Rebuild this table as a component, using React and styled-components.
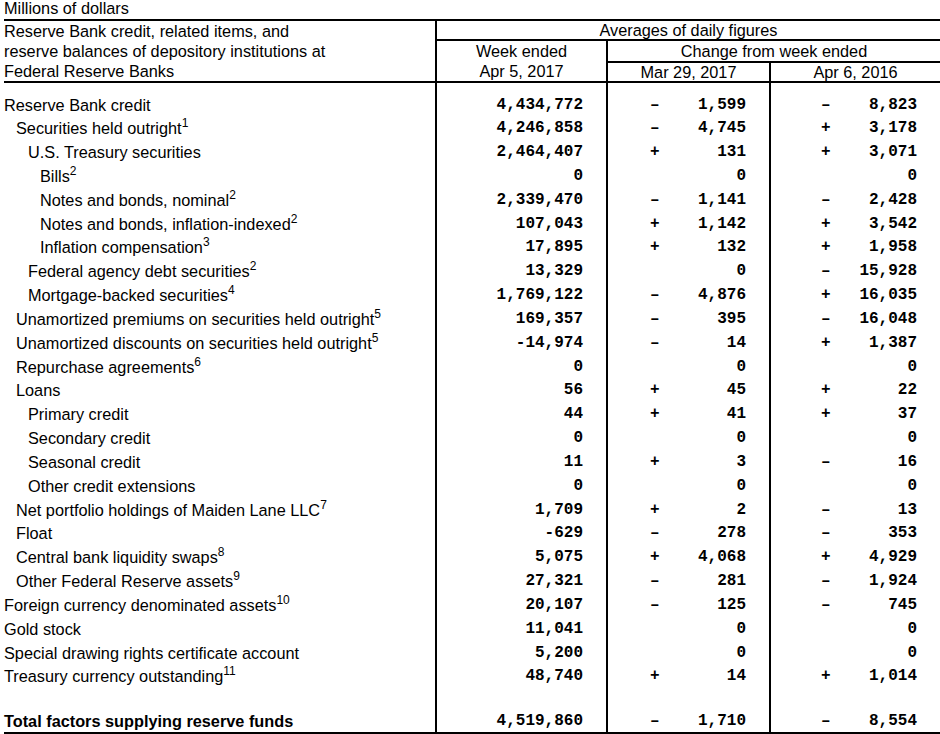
import React from "react";
import styled, { createGlobalStyle } from "styled-components";

const Global = createGlobalStyle`
  html, body { margin: 0; padding: 0; background: #fff; }
  body { font-family: "Liberation Sans", Arial, sans-serif; color: #000; }
`;

const COLS = "431px 171px 163px 1fr";
const LINE = "2px solid #000";

const Page = styled.div`
  width: 936px;
  padding-left: 4px;
  font-size: 16.3px;
  color: #000;
  overflow: hidden;
`;

const Caption = styled.div`
  height: 19px;
  line-height: 17px;
  box-sizing: border-box;
`;

const Header = styled.div`
  display: grid;
  grid-template-columns: ${COLS};
  grid-template-rows: 20px 22px 18px;
  border-top: ${LINE};
  border-bottom: ${LINE};
`;

const HeadLabel = styled.div`
  grid-column: 1;
  grid-row: 1 / 4;
  line-height: 20px;
`;

const HeadCell = styled.div`
  box-sizing: border-box;
  grid-column: ${(p) => p.$col};
  grid-row: ${(p) => p.$row};
  border-left: ${LINE};
  border-bottom: ${(p) => (p.$under ? LINE : "none")};
  text-align: center;
  line-height: ${(p) => p.$lh}px;
  white-space: nowrap;
`;

const Body = styled.div`
  border-bottom: ${LINE};
`;

const Row = styled.div`
  display: grid;
  grid-template-columns: ${COLS};
  height: ${(p) => p.$h}px;
  line-height: ${(p) => p.$h}px;
`;

const Label = styled.div`
  padding-left: ${(p) => p.$level * 12}px;
  font-weight: ${(p) => (p.$bold ? 700 : 400)};
  white-space: nowrap;
`;

const Sup = styled.sup`
  font-size: 12px;
  line-height: 0;
  vertical-align: 7px;
`;

const NumCell = styled.div`
  box-sizing: border-box;
  border-left: ${LINE};
  display: flex;
  justify-content: flex-end;
  padding-right: 23px;
  font-family: "Liberation Mono", "Courier New", monospace;
  font-weight: 700;
  font-size: 16px;
  white-space: pre;
`;

const Sign = styled.span`
  width: 1ch;
  text-align: center;
`;

const Value = styled.span`
  width: 9ch;
  text-align: right;
`;

const rows = [
  ["Reserve Bank credit", null, 0, "4,434,772", "–", "1,599", "–", "8,823"],
  ["Securities held outright", "1", 1, "4,246,858", "–", "4,745", "+", "3,178"],
  ["U.S. Treasury securities", null, 2, "2,464,407", "+", "131", "+", "3,071"],
  ["Bills", "2", 3, "0", "", "0", "", "0"],
  ["Notes and bonds, nominal", "2", 3, "2,339,470", "–", "1,141", "–", "2,428"],
  ["Notes and bonds, inflation-indexed", "2", 3, "107,043", "+", "1,142", "+", "3,542"],
  ["Inflation compensation", "3", 3, "17,895", "+", "132", "+", "1,958"],
  ["Federal agency debt securities", "2", 2, "13,329", "", "0", "–", "15,928"],
  ["Mortgage-backed securities", "4", 2, "1,769,122", "–", "4,876", "+", "16,035"],
  ["Unamortized premiums on securities held outright", "5", 1, "169,357", "–", "395", "–", "16,048"],
  ["Unamortized discounts on securities held outright", "5", 1, "-14,974", "–", "14", "+", "1,387"],
  ["Repurchase agreements", "6", 1, "0", "", "0", "", "0"],
  ["Loans", null, 1, "56", "+", "45", "+", "22"],
  ["Primary credit", null, 2, "44", "+", "41", "+", "37"],
  ["Secondary credit", null, 2, "0", "", "0", "", "0"],
  ["Seasonal credit", null, 2, "11", "+", "3", "–", "16"],
  ["Other credit extensions", null, 2, "0", "", "0", "", "0"],
  ["Net portfolio holdings of Maiden Lane LLC", "7", 1, "1,709", "+", "2", "–", "13"],
  ["Float", null, 1, "-629", "–", "278", "–", "353"],
  ["Central bank liquidity swaps", "8", 1, "5,075", "+", "4,068", "+", "4,929"],
  ["Other Federal Reserve assets", "9", 1, "27,321", "–", "281", "–", "1,924"],
  ["Foreign currency denominated assets", "10", 0, "20,107", "–", "125", "–", "745"],
  ["Gold stock", null, 0, "11,041", "", "0", "", "0"],
  ["Special drawing rights certificate account", null, 0, "5,200", "", "0", "", "0"],
  ["Treasury currency outstanding", "11", 0, "48,740", "+", "14", "+", "1,014"],
];

const Spacer = ({ h }) => (
  <Row $h={h}>
    <Label $level={0} />
    <NumCell />
    <NumCell />
    <NumCell />
  </Row>
);

const DataRow = ({ label, sup, level, week, s1, c1, s2, c2, h = 23.83, bold }) => (
  <Row $h={h}>
    <Label $level={level} $bold={bold}>
      {label}
      {sup && <Sup>{sup}</Sup>}
    </Label>
    <NumCell>
      <span>{week}</span>
    </NumCell>
    <NumCell>
      <Sign>{s1}</Sign>
      <Value>{c1}</Value>
    </NumCell>
    <NumCell>
      <Sign>{s2}</Sign>
      <Value>{c2}</Value>
    </NumCell>
  </Row>
);

export default function App() {
  return (
    <>
      <Global />
      <Page>
        <Caption>Millions of dollars</Caption>
        <Header>
          <HeadLabel>
            Reserve Bank credit, related items, and
            <br />
            reserve balances of depository institutions at
            <br />
            Federal Reserve Banks
          </HeadLabel>
          <HeadCell $col="2 / 5" $row="1" $under $lh={18}>
            Averages of daily figures
          </HeadCell>
          <HeadCell $col="2" $row="2 / 4" $lh={20}>
            Week ended
            <br />
            Apr 5, 2017
          </HeadCell>
          <HeadCell $col="3 / 5" $row="2" $under $lh={20}>
            Change from week ended
          </HeadCell>
          <HeadCell $col="3" $row="3" $lh={18}>
            Mar 29, 2017
          </HeadCell>
          <HeadCell $col="4" $row="3" $lh={18}>
            Apr 6, 2016
          </HeadCell>
        </Header>
        <Body>
          <Spacer h={10.5} />
          {rows.map(([label, sup, level, week, s1, c1, s2, c2]) => (
            <DataRow
              key={label}
              label={label}
              sup={sup}
              level={level}
              week={week}
              s1={s1}
              c1={c1}
              s2={s2}
              c2={c2}
            />
          ))}
          <Spacer h={20.9} />
          <DataRow
            label="Total factors supplying reserve funds"
            level={0}
            bold
            week="4,519,860"
            s1="–"
            c1="1,710"
            s2="–"
            c2="8,554"
            h={22}
          />
        </Body>
      </Page>
    </>
  );
}
